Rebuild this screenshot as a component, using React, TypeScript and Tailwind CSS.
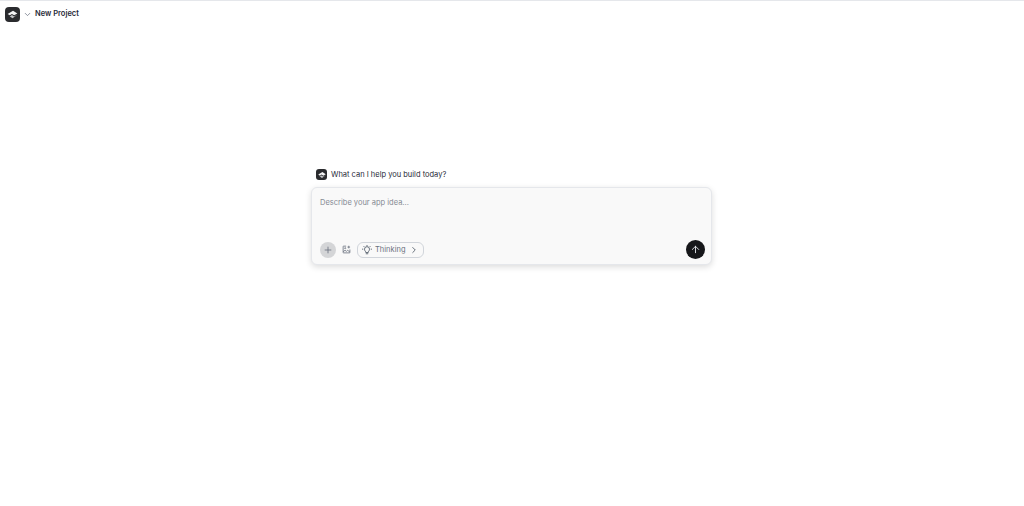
import { ArrowUp, ChevronDown, ChevronRight, Plus } from "lucide-react";

function Logo({ size }: { size: "lg" | "sm" }) {
    const box = size === "lg" ? "w-[15px] h-[15px] rounded-[4px]" : "w-[11px] h-[11px] rounded-[3px]";
    const art = size === "lg" ? "w-[13px] h-[13px]" : "w-[10px] h-[10px]";
    return (
        <div className={`${box} bg-[#2a2b2e] flex items-center justify-center shrink-0`}>
            <svg className={art} viewBox="0 0 24 24">
                <path d="M13 5 21 10 15 13.500 11 11 7 13.500 3 11Z" fill="#f4f4f5" />
                <path d="M3 13 7 15.500 11 13 15 15.500 21 12.500 12 19Z" fill="#c4c5c8" />
            </svg>
        </div>
    );
}

function ImageSparkIcon() {
    return (
        <svg className="w-[9px] h-[9px] text-[#6b7280]" viewBox="0 0 24 24" fill="none" stroke="currentColor" strokeWidth={2.2}>
            <path d="M11 3H4a1 1 0 0 0-1 1v16a1 1 0 0 0 1 1h16a1 1 0 0 0 1-1v-8" />
            <circle cx="8.500" cy="8.500" r="1.500" />
            <path d="m3 18 5-4 4 3 3-3 6 5" />
            <path d="M18 2v7M14.500 5.500h7" />
        </svg>
    );
}

// lucide's Lightbulb has no rays, the reference's does
function BulbIcon() {
    return (
        <svg className="w-[10px] h-[10px] text-[#4b5563]" viewBox="0 0 24 24" fill="none" stroke="currentColor" strokeWidth={2} strokeLinecap="round">
            <path d="M9 17c0-2-3-3-3-7a6 6 0 0 1 12 0c0 4-3 5-3 7Z" />
            <path d="M10 21h4" />
            <path d="M12 1v1M2 10H1M23 10h-1M4.500 3.500l.7.7M19.500 3.500l-.7.7" />
        </svg>
    );
}

export default function App() {
    return (
        <div className="h-[506px] bg-white flex flex-col font-['Inter',sans-serif] overflow-hidden">
            {/* Top bar */}
            <header className="h-[27px] border-t border-[#e5e7eb] flex items-center pl-[5px] shrink-0">
                <Logo size="lg" />
                <ChevronDown className="w-[9px] h-[9px] ml-[3px] text-[#6b7280]" strokeWidth={2} />
                <span className="ml-[3px] text-[7.5px] leading-none font-semibold text-[#1f2937]">New Project</span>
            </header>

            {/* Prompt */}
            <main className="flex-1 flex flex-col items-center pt-[141px]">
                <div className="w-[401px] mr-[1px]">
                    <div className="flex items-center h-[13px] pl-[5px] mb-[6px]">
                        <Logo size="sm" />
                        <span className="ml-[4px] text-[7.5px] leading-none text-[#1f2937]">What can I help you build today?</span>
                    </div>
                    <div className="h-[78px] rounded-[6px] border border-[#e5e7eb] bg-[#f9f9f9] shadow-[0_2px_6px_rgba(0,0,0,0.14)] flex flex-col justify-between pt-[9px] pb-[5px] pl-[8px] pr-[6px]">
                        <div className="text-[7.5px] leading-[11px] text-[#858a93]">Describe your app idea...</div>
                        <div className="flex items-center justify-between">
                            <div className="flex items-center">
                                <div className="w-[16px] h-[16px] rounded-full bg-[#d4d5d7] flex items-center justify-center">
                                    <Plus className="w-[10px] h-[10px] text-[#6b7280]" strokeWidth={2} />
                                </div>
                                <div className="w-[10px] ml-[5px] flex justify-center">
                                    <ImageSparkIcon />
                                </div>
                                <div className="ml-[6px] h-[16px] w-[67px] rounded-[6px] border border-[#d1d5db] flex items-center pl-[4px]">
                                    <BulbIcon />
                                    <span className="ml-[3px] text-[7.5px] leading-none text-[#6b7280]">Thinking</span>
                                    <ChevronRight className="w-[10px] h-[10px] ml-[3px] text-[#4b5563]" strokeWidth={2} />
                                </div>
                            </div>
                            <div className="w-[19px] h-[19px] rounded-full bg-[#16171a] flex items-center justify-center">
                                <ArrowUp className="w-[11px] h-[11px] text-[#e5e7eb]" strokeWidth={2} />
                            </div>
                        </div>
                    </div>
                </div>
            </main>
        </div>
    );
}
